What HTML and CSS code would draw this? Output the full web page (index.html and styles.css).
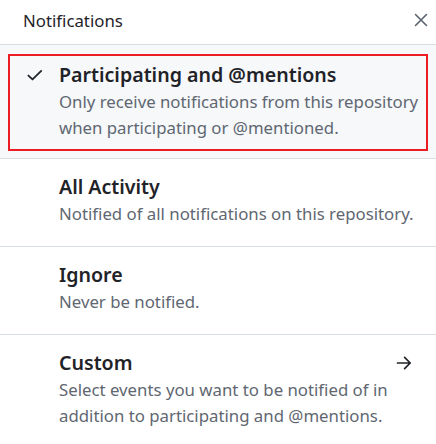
FILE: index.html
```html
<!DOCTYPE html>
<html>
<head>
<meta charset="utf-8">
<link rel="stylesheet" href="styles.css">
</head>
<body>
<div class="panel">
  <div class="header">
    <span class="header-title">Notifications</span>
    <button class="close" aria-label="Close">
      <svg width="14" height="14" viewBox="0 0 14 14"><path d="M1.5 1.5L12.5 12.5M12.5 1.5L1.5 12.5" stroke="currentColor" stroke-width="1.6" stroke-linecap="round" fill="none"/></svg>
    </button>
  </div>
  <div class="list">
    <div class="item selected">
      <div class="box">
        <span class="icon"><svg width="18" height="16" viewBox="0 0 18 16"><path d="M1.6 8.6L6.2 13L16 3.4" stroke="currentColor" stroke-width="2" stroke-linecap="round" stroke-linejoin="round" fill="none"/></svg></span>
        <div class="text">
          <div class="title">Participating and @mentions</div>
          <div class="desc">Only receive notifications from this repository when participating or @mentioned.</div>
        </div>
      </div>
    </div>
    <div class="item">
      <div class="box">
        <span class="icon"></span>
        <div class="text">
          <div class="title">All Activity</div>
          <div class="desc">Notified of all notifications on this repository.</div>
        </div>
      </div>
    </div>
    <div class="item">
      <div class="box">
        <span class="icon"></span>
        <div class="text">
          <div class="title">Ignore</div>
          <div class="desc">Never be notified.</div>
        </div>
      </div>
    </div>
    <div class="item last">
      <div class="box">
        <span class="icon"></span>
        <div class="text">
          <div class="title-row">
            <div class="title">Custom</div>
            <svg class="arrow" width="16" height="16" viewBox="0 0 16 16"><path d="M1.5 8H14.2M8.6 2.4L14.2 8L8.6 13.6" stroke="currentColor" stroke-width="1.7" stroke-linecap="round" stroke-linejoin="round" fill="none"/></svg>
          </div>
          <div class="desc">Select events you want to be notified of in addition to participating and @mentions.</div>
        </div>
      </div>
    </div>
  </div>
</div>
</body>
</html>
```

FILE: styles.css
```css
* { box-sizing: border-box; }
html, body { margin: 0; padding: 0; background: #ffffff; }
body {
  font-family: "Noto Sans", "Open Sans", sans-serif;
  color: #1f2328;
  width: 436px;
  height: 444px;
  overflow: hidden;
}
.panel { width: 436px; }
.header {
  display: flex;
  align-items: center;
  justify-content: space-between;
  height: 45px;
  padding: 0 3px 0 23px;
  border-bottom: 1px solid #d8dee4;
  background: #ffffff;
}
.header-title {
  font-size: 16.8px;
  font-weight: 400;
  color: #1f2328;
  margin-top: -4px;
}
.close {
  display: flex;
  align-items: center;
  justify-content: center;
  width: 24px;
  height: 24px;
  padding: 0;
  border: 0;
  background: transparent;
  color: #59636e;
  margin-top: -4px;
}
.item {
  padding: 7px 8px 9px;
  border-bottom: 1px solid #d8dee4;
}
.item.selected { padding: 9px 8px 7px; background: #f6f8fa; }
.item.last { border-bottom: 0; }
.box {
  display: flex;
  align-items: flex-start;
  border: 2px solid transparent;
  padding: 5px 6px 8px 17px;
}
.item.selected .box { border-color: #ec1c24; }
.icon {
  flex: 0 0 16px;
  width: 16px;
  height: 28px;
  display: flex;
  align-items: center;
  margin-right: 16px;
  color: #1f2328;
}
.text { flex: 1; min-width: 0; }
.title {
  font-size: 19.6px;
  font-weight: 600;
  line-height: 28px;
  color: #1f2328;
}
.title-row {
  display: flex;
  align-items: center;
  justify-content: space-between;
}
.arrow { color: #1f2328; margin-right: 8px; }
.desc {
  font-size: 16.8px;
  line-height: 26px;
  color: #5f6771;
}
```
